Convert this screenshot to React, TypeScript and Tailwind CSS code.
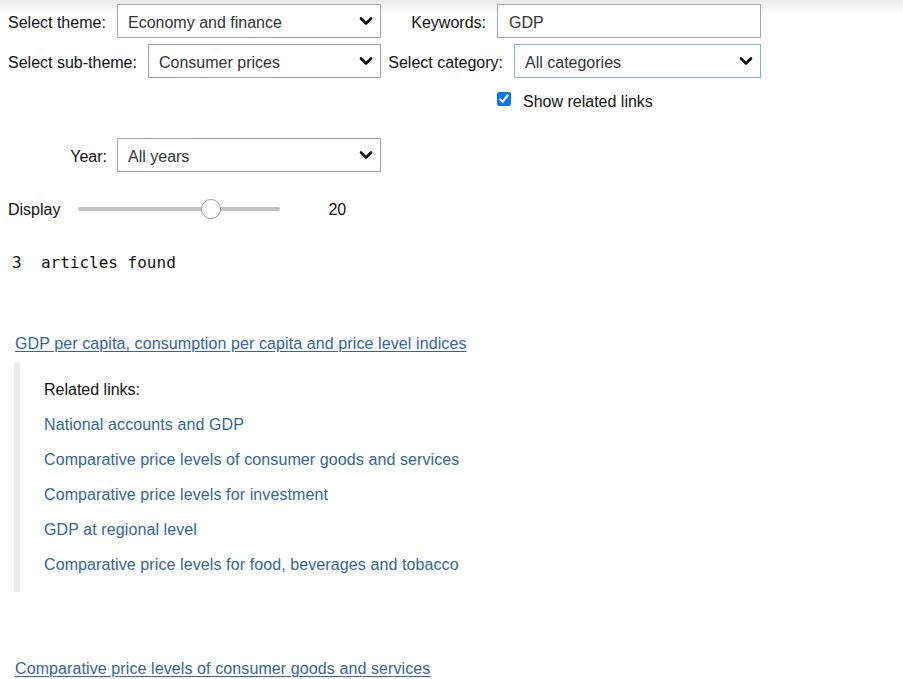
import React from "react";

const Chevron = () => (
  <svg
    className="pointer-events-none absolute right-[8px] top-1/2 -translate-y-1/2"
    width="14"
    height="10"
    viewBox="0 0 14 10"
  >
    <path d="M2 2.5 L7 7.5 L12 2.5" fill="none" stroke="#111" strokeWidth="2.6" strokeLinecap="round" strokeLinejoin="round" />
  </svg>
);

function Select({ value, w, blue }: { value: string; w: string; blue?: boolean }) {
  return (
    <div className={`relative h-[34px] ${w}`}>
      <div
        className={`h-full w-full flex items-center pl-[10px] pt-[4px] bg-white text-[#333] border ${
          blue ? "border-[#7fb6e0]" : "border-[#a6a6a6]"
        }`}
      >
        {value}
      </div>
      <Chevron />
    </div>
  );
}

const relatedLinks = [
  "National accounts and GDP",
  "Comparative price levels of consumer goods and services",
  "Comparative price levels for investment",
  "GDP at regional level",
  "Comparative price levels for food, beverages and tobacco",
];

export default function App() {
  return (
    <div
      className="min-h-[679px] w-full bg-[linear-gradient(to_bottom,#e9e9e9_0px,#ffffff_14px)] pt-[4px] text-[16px] text-[#111]"
      style={{ fontFamily: '"Liberation Sans", Arial, sans-serif' }}
    >
      {/* Row 1 */}
      <div className="flex h-[34px]">
        <div className="flex w-[381px] items-center pl-[8px]">
          <span className="pt-[4px]">Select theme:</span>
          <div className="ml-auto">
            <Select value="Economy and finance" w="w-[264px]" />
          </div>
        </div>
        <div className="flex w-[380px] items-center justify-end">
          <span className="pt-[4px]">Keywords:</span>
          <div className="ml-[11px] flex h-[34px] w-[264px] items-center border border-[#a6a6a6] bg-white pl-[11px] pt-[4px] text-[#333]">
            GDP
          </div>
        </div>
      </div>

      {/* Row 2 */}
      <div className="mt-[6px] flex h-[34px]">
        <div className="flex w-[381px] items-center pl-[8px]">
          <span className="pt-[4px]">Select sub-theme:</span>
          <div className="ml-auto">
            <Select value="Consumer prices" w="w-[233px]" />
          </div>
        </div>
        <div className="flex w-[380px] items-center justify-end">
          <span className="pt-[4px]">Select category:</span>
          <div className="ml-[11px]">
            <Select value="All categories" w="w-[247px]" blue />
          </div>
        </div>
      </div>

      {/* Checkbox */}
      <div className="mt-[11px] flex h-[20px] items-center pl-[497px]">
        <input type="checkbox" defaultChecked className="m-0 h-[14px] w-[14px] accent-[#0075ff]" />
        <span className="ml-[12px] pt-[5px]">Show related links</span>
      </div>

      {/* Year */}
      <div className="mt-[29px] flex h-[34px] w-[381px] items-center justify-end">
        <span className="pt-[4px]">Year:</span>
        <div className="ml-[10px]">
          <Select value="All years" w="w-[264px]" />
        </div>
      </div>

      {/* Display slider */}
      <div className="mt-[27px] flex h-[20px] items-center pl-[8px]">
        <span className="pt-[2px]">Display</span>
        <div className="relative ml-[18px] h-[4px] w-[202px] rounded-full bg-[#c2c2c2]">
          <div className="absolute left-[123px] top-1/2 h-[20px] w-[20px] -translate-y-1/2 rounded-full border border-[#9a9a9a] bg-white" />
        </div>
        <span className="ml-[48px] pt-[2px]">20</span>
      </div>

      {/* Articles found */}
      <div
        className="mt-[33px] flex h-[20px] items-center pl-[12px] pt-[2px] text-[16px] text-[#111] whitespace-pre"
        style={{ fontFamily: '"DejaVu Sans Mono", "Liberation Mono", monospace' }}
      >
        {"3  articles found"}
      </div>

      {/* Link 1 */}
      <div className="mt-[61px] flex h-[20px] items-center pl-[15px] pt-[2px]">
        <a href="#" className="text-[#336699] underline underline-offset-[2px] tracking-[0.1px]">
          GDP per capita, consumption per capita and price level indices
        </a>
      </div>

      {/* Related links block */}
      <div className="ml-[14px] mt-[9px] border-l-[6px] border-[#ececec] pb-[10px] pl-[24px] pt-[10px]">
        <div className="flex h-[35px] items-center text-[#111]">Related links:</div>
        {relatedLinks.map((l) => (
          <div key={l} className="flex h-[35px] items-center">
            <a href="#" className="text-[#336699] no-underline tracking-[0.1px]">
              {l}
            </a>
          </div>
        ))}
      </div>

      {/* Link 2 */}
      <div className="mt-[66px] flex h-[20px] items-center pl-[15px] pt-[2px]">
        <a href="#" className="text-[#336699] underline underline-offset-[2px] tracking-[0.1px]">
          Comparative price levels of consumer goods and services
        </a>
      </div>
    </div>
  );
}
